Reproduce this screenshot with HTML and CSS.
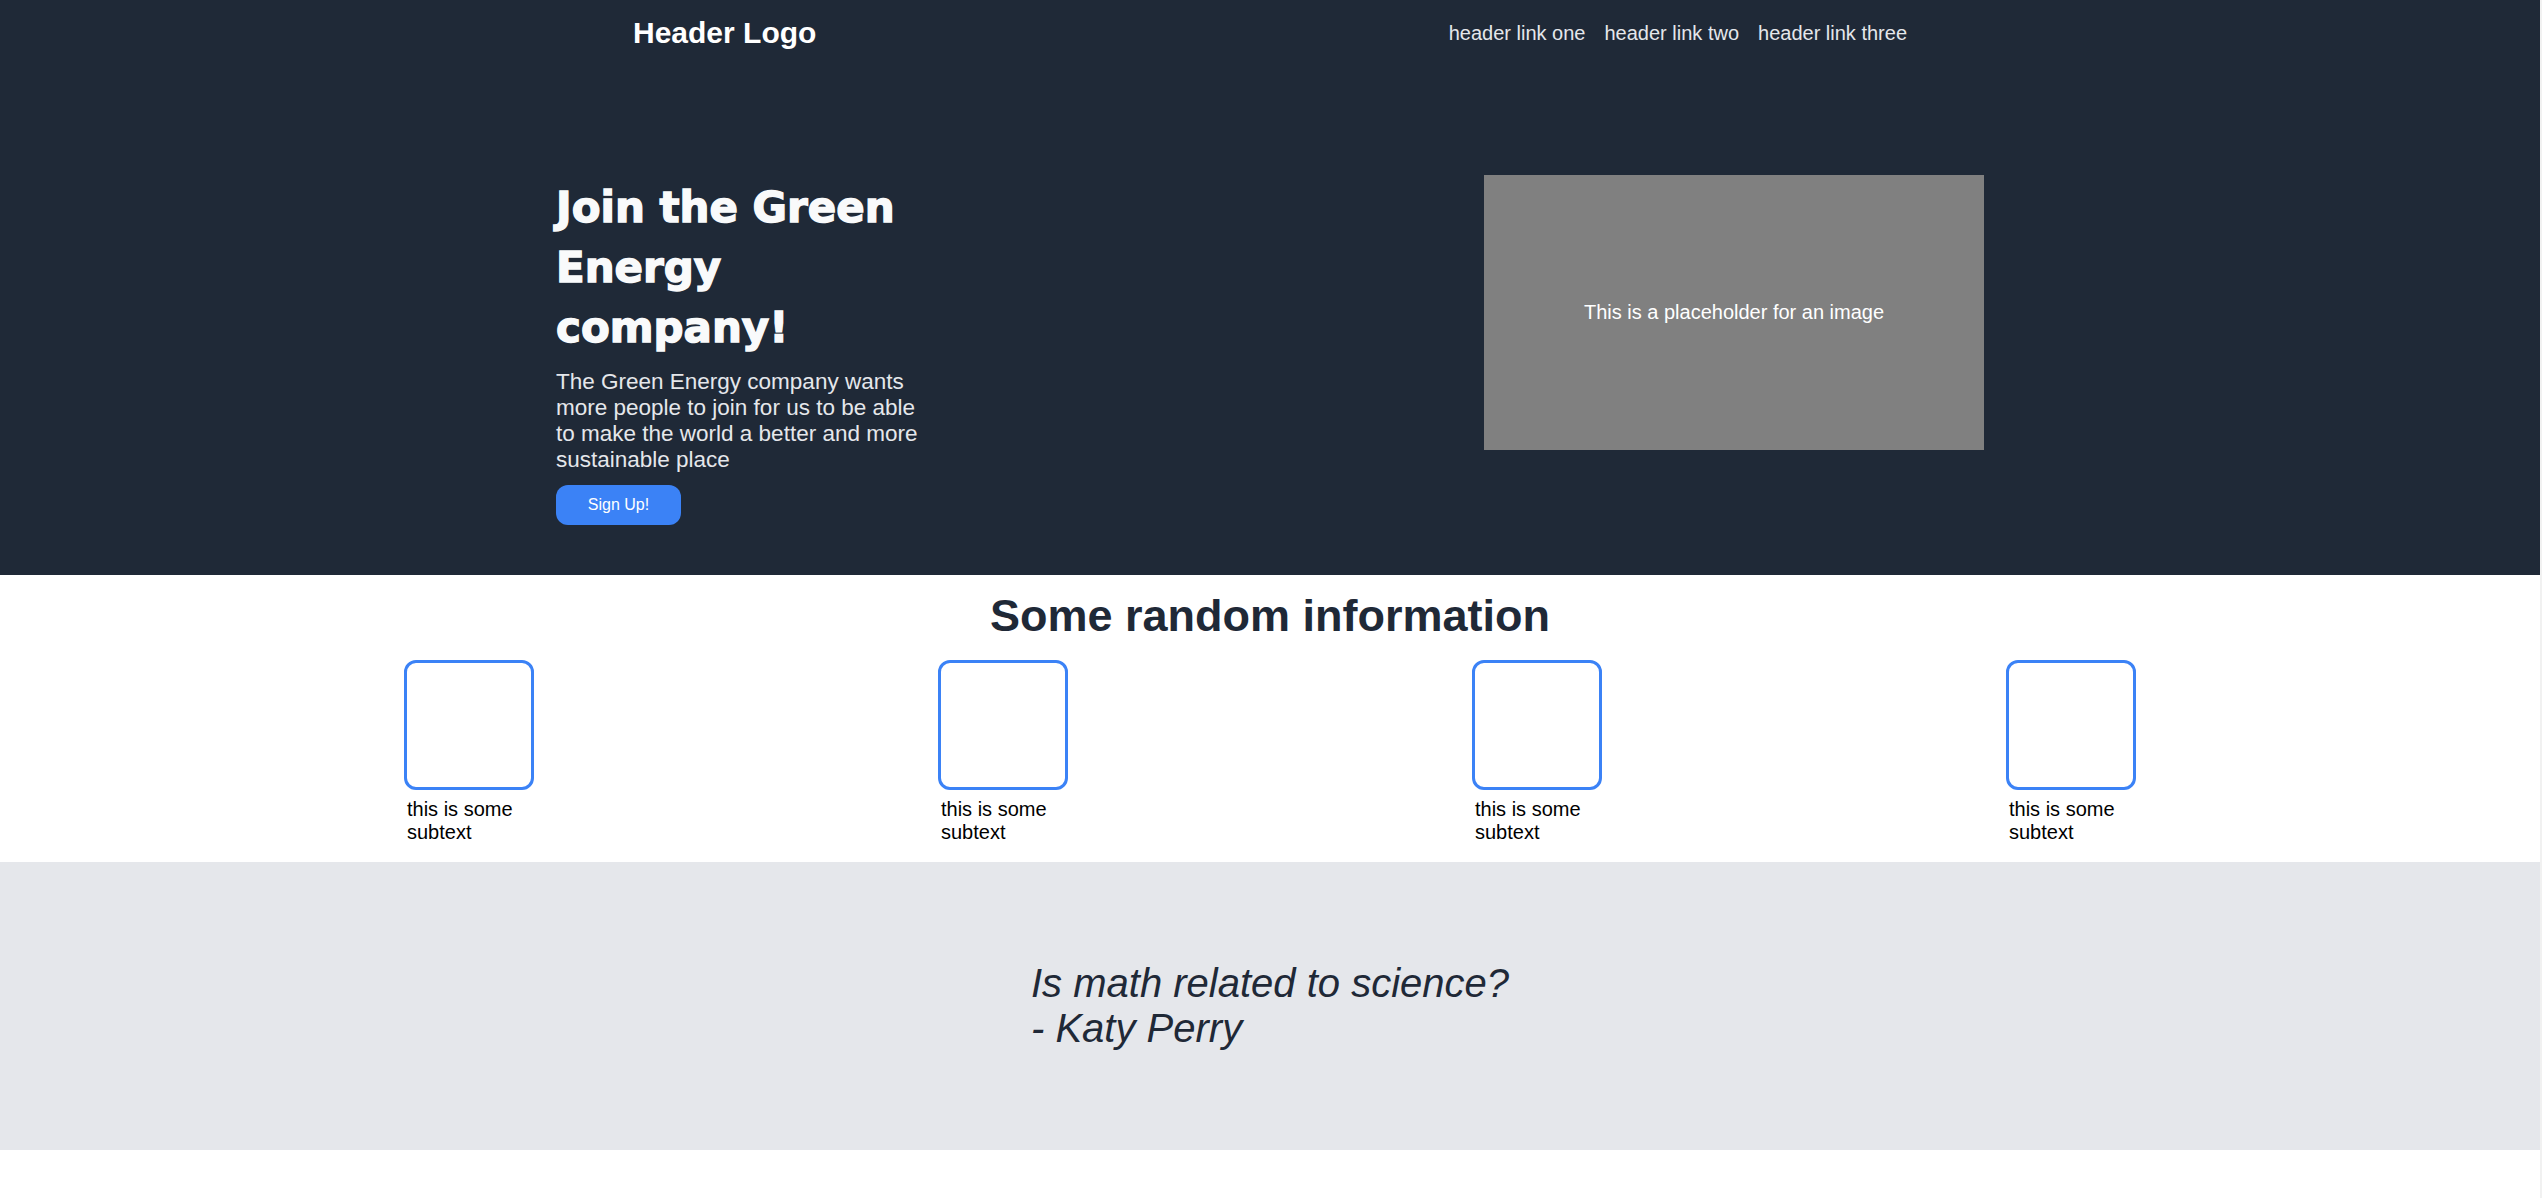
FILE: index.html
```html
<!DOCTYPE html>
<html lang="en">
<head>
<meta charset="utf-8">
<title>Green Energy</title>
<link rel="stylesheet" href="styles.css">
</head>
<body>
<div class="page">
  <div class="top">
    <header class="header">
      <div class="logo">Header Logo</div>
      <nav class="nav">
        <a href="#">header link one</a>
        <a href="#">header link two</a>
        <a href="#">header link three</a>
      </nav>
    </header>
    <section class="hero">
      <div class="hero-text">
        <h1 class="hero-title">Join the Green Energy company!</h1>
        <p class="hero-copy">The Green Energy company wants more people to join for us to be able to make the world a better and more sustainable place</p>
        <button class="btn">Sign Up!</button>
      </div>
      <div class="placeholder">This is a placeholder for an image</div>
    </section>
  </div>
  <section class="info">
    <h2 class="info-title">Some random information</h2>
    <div class="cards">
      <div class="card"><div class="card-box"></div><p class="card-text">this is some subtext</p></div>
      <div class="card"><div class="card-box"></div><p class="card-text">this is some subtext</p></div>
      <div class="card"><div class="card-box"></div><p class="card-text">this is some subtext</p></div>
      <div class="card"><div class="card-box"></div><p class="card-text">this is some subtext</p></div>
    </div>
  </section>
  <section class="quote">
    <blockquote class="quote-text">Is math related to science?<br>- Katy Perry</blockquote>
  </section>
</div>
</body>
</html>
```
FILE: styles.css
```css
html {
  background: #f1f1f1;
}
body {
  margin: 0;
  font-family: "Liberation Sans", Arial, sans-serif;
}
.page {
  width: calc(100% - 2px);
  min-height: 100vh;
  background: #ffffff;
}
.top {
  background: #1f2937;
  padding: 16px 0 50px;
}
.header {
  width: 1274px;
  margin: 0 auto;
  display: flex;
  justify-content: space-between;
  align-items: center;
}
.logo {
  color: #ffffff;
  font-size: 30px;
  font-weight: bold;
}
.nav {
  display: flex;
  gap: 19px;
}
.nav a {
  color: #e5e7eb;
  font-size: 20px;
  text-decoration: none;
}
.hero {
  width: 1428px;
  margin: 125px auto 0;
  display: flex;
  justify-content: space-between;
  align-items: flex-start;
}
.hero-text {
  width: 372px;
  padding-top: 3px;
}
.hero-title {
  margin: 0;
  color: #f9fafb;
  font-family: "DejaVu Sans", sans-serif;
  font-weight: bold;
  font-size: 42px;
  line-height: 60px;
  -webkit-text-stroke: 1.4px #f9fafb;
}
.hero-copy {
  margin: 11px 0 0;
  color: #e5e7eb;
  font-size: 22.5px;
}
.btn {
  margin-top: 12px;
  width: 125px;
  height: 40px;
  border: none;
  border-radius: 12px;
  background: #3b82f6;
  color: #ffffff;
  font-family: "Liberation Sans", Arial, sans-serif;
  font-size: 16px;
  display: flex;
  align-items: center;
  justify-content: center;
}
.placeholder {
  width: 500px;
  height: 275px;
  background: #808080;
  color: #ffffff;
  font-size: 20px;
  display: flex;
  align-items: center;
  justify-content: center;
}
.info {
  padding: 15px 0 18px;
}
.info-title {
  margin: 0 0 18px;
  text-align: center;
  color: #1f2937;
  font-size: 45px;
  font-weight: bold;
  line-height: normal;
}
.cards {
  display: flex;
  justify-content: space-evenly;
}
.card {
  width: 130px;
}
.card-box {
  width: 130px;
  height: 130px;
  box-sizing: border-box;
  border: 3px solid #3b82f6;
  border-radius: 12px;
}
.card-text {
  margin: 8px 0 0;
  padding-left: 3px;
  font-size: 20px;
  color: #000000;
}
.quote {
  background: #e5e7eb;
  height: 288px;
  display: flex;
  justify-content: center;
  align-items: center;
}
.quote-text {
  margin: 0;
  color: #1f2937;
  font-size: 40px;
  font-style: italic;
}
```
